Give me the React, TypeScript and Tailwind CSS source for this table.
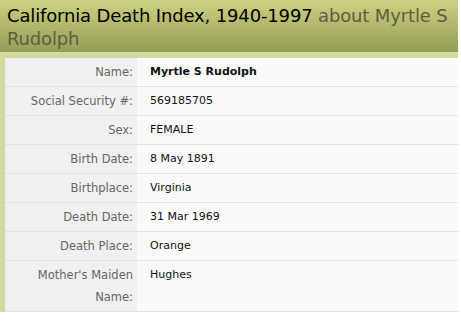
import React from 'react';

const rows: { label: string; value: string; bold?: boolean }[] = [
  { label: 'Name:', value: 'Myrtle S Rudolph', bold: true },
  { label: 'Social Security #:', value: '569185705' },
  { label: 'Sex:', value: 'FEMALE' },
  { label: 'Birth Date:', value: '8 May 1891' },
  { label: 'Birthplace:', value: 'Virginia' },
  { label: 'Death Date:', value: '31 Mar 1969' },
  { label: 'Death Place:', value: 'Orange' },
  { label: "Mother's Maiden Name:", value: 'Hughes' },
];

export default function App() {
  return (
    <div className="w-[461px] h-[321px] bg-white overflow-hidden">
      <div className="w-[458px] bg-[#d4da9f]">
        <div className="h-[52px] px-[7px] pt-[4px] bg-gradient-to-b from-[#cdd283] to-[#969c55] text-[18px] leading-[23px] text-black font-['DejaVu_Sans',sans-serif] tracking-[-0.15px]">
          California Death Index, 1940-1997 <span className="text-[#5e5e40]">about Myrtle S Rudolph</span>
        </div>
        <div className="pt-[6px] pl-[5px]">
          <table className="w-full border-collapse font-['DejaVu_Sans',sans-serif] text-[11px]">
            <tbody>
              {rows.map((r) => (
                <tr key={r.label} className="border-b border-[#e2e2e2]">
                  <td className="w-[132px] bg-[#f0f0f0] text-right align-top text-[#666] text-[11.5px] pr-[4px] pl-[8px] py-[3px] leading-[22px]">
                    {r.label}
                  </td>
                  <td className={`bg-[#fafafa] align-top text-[#111] pl-[13px] py-[3px] leading-[22px] ${r.bold ? 'font-bold' : ''}`}>
                    {r.value}
                  </td>
                </tr>
              ))}
            </tbody>
          </table>
        </div>
      </div>
    </div>
  );
}
